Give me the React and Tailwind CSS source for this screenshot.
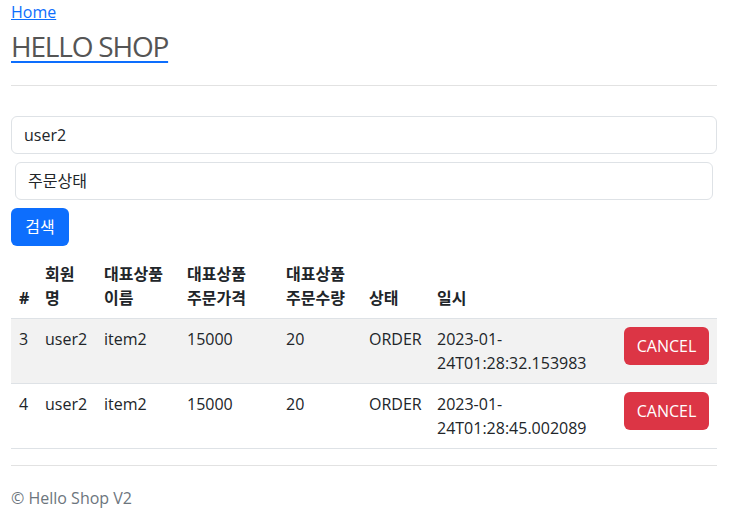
import React from "react";

const orders = [
  { id: 3, member: "user2", item: "item2", price: 15000, count: 20, status: "ORDER", date: "2023-01-24T01:28:32.153983" },
  { id: 4, member: "user2", item: "item2", price: 15000, count: 20, status: "ORDER", date: "2023-01-24T01:28:45.002089" },
];

export default function App() {
  return (
    <div
      className="pl-[11px] pr-[19px] text-[16px] leading-6 text-[#212529] bg-white"
      style={{ fontFamily: '"Open Sans", "Noto Sans CJK KR", sans-serif' }}
    >
      {/* header */}
      <div>
        <a href="#" className="text-[#0d6efd] underline">Home</a>
      </div>
      <h3 className="mt-[5px] text-[28px] leading-[34px] tracking-[-1.2px]">
        <a href="#" className="text-[#555] underline decoration-[#0d6efd] decoration-2 underline-offset-[4px]">
          HELLO SHOP
        </a>
      </h3>
      <hr className="mt-[22px] border-[#e2e2e2]" />

      {/* search form */}
      <div className="mt-[30px] flex flex-col">
        <input
          className="h-[38px] rounded-md border border-[#dee2e6] px-3 outline-none"
          defaultValue="user2"
        />
        <div className="mx-1 mt-2 flex h-[38px] items-center rounded-md border border-[#dee2e6] px-3">
          주문상태
        </div>
        <div className="mt-2">
          <button className="h-[38px] w-[58px] rounded-md bg-[#0d6efd] text-white">검색</button>
        </div>
      </div>

      {/* orders table */}
      <table className="mt-2 w-full table-fixed border-collapse">
        <thead>
          <tr className="border-b border-[#dee2e6] align-bottom font-bold">
            <th className="w-[26px] p-2 text-left">#</th>
            <th className="w-[59px] p-2 text-left">회원명</th>
            <th className="w-[83px] p-2 text-left break-keep">대표상품 이름</th>
            <th className="w-[99px] p-2 text-left break-keep">대표상품 주문가격</th>
            <th className="w-[83px] p-2 text-left break-keep">대표상품 주문수량</th>
            <th className="w-[68px] p-2 text-left">상태</th>
            <th className="w-[187px] p-2 text-left">일시</th>
            <th className="w-[101px] p-2"></th>
          </tr>
        </thead>
        <tbody>
          {orders.map((o, i) => (
            <tr
              key={o.id}
              className={`border-b border-[#dee2e6] align-top ${i % 2 === 0 ? "bg-[#f2f2f2]" : ""}`}
            >
              <td className="p-2">{o.id}</td>
              <td className="p-2">{o.member}</td>
              <td className="p-2">{o.item}</td>
              <td className="p-2">{o.price}</td>
              <td className="p-2">{o.count}</td>
              <td className="p-2">{o.status}</td>
              <td className="p-2">{o.date}</td>
              <td className="p-2 text-right">
                <button className="h-[38px] w-[85px] rounded-md bg-[#dc3545] text-white">CANCEL</button>
              </td>
            </tr>
          ))}
        </tbody>
      </table>

      {/* footer */}
      <hr className="mt-4 border-[#e2e2e2]" />
      <footer className="mt-[20px] text-[#6c757d]">© Hello Shop V2</footer>
    </div>
  );
}
